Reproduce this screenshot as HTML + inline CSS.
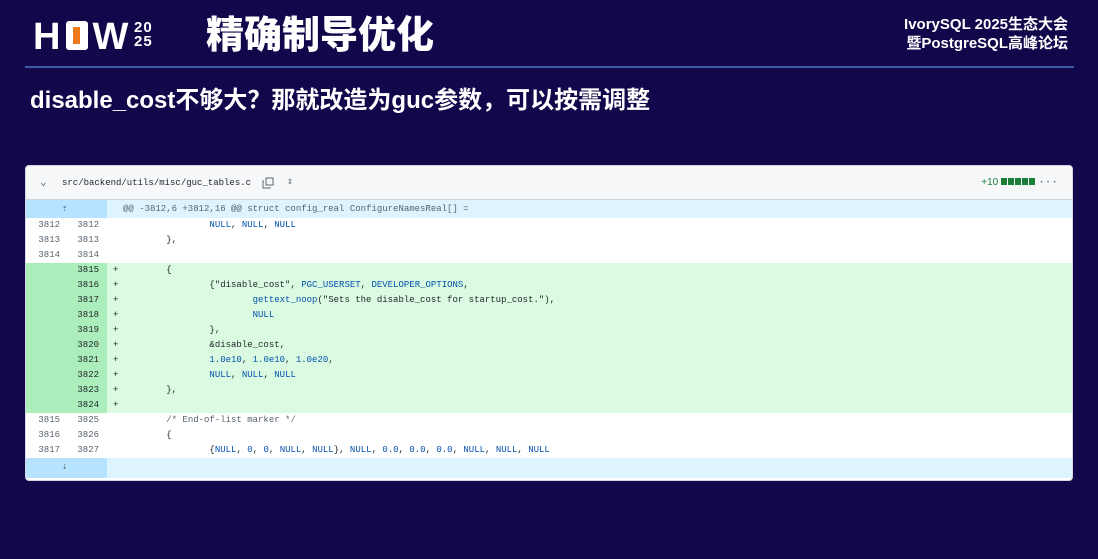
<!DOCTYPE html>
<html><head><meta charset="utf-8"><style>
*{margin:0;padding:0;box-sizing:border-box}
body{width:1098px;height:559px;background:#12074a;position:relative;overflow:hidden;font-family:"Liberation Sans","Noto Sans CJK SC",sans-serif;color:#fff}
.logo{position:absolute;left:33px;top:17px;font:900 38px/40px "Liberation Sans",sans-serif;letter-spacing:2px}
.yr{position:absolute;left:134px;top:21px;font:900 15px/14px "Liberation Sans",sans-serif;letter-spacing:1px}
.t{position:absolute;left:206px;top:14px;font-weight:900;font-size:38px;line-height:44px}
.r{position:absolute;right:30px;top:15px;text-align:right;font-weight:bold;font-size:15px;line-height:19px}
.line{position:absolute;left:25px;top:66px;width:1049px;height:2px;background:#3b5aa6}
.sub{position:absolute;left:30px;top:83px;font-weight:bold;font-size:24px;line-height:30px}
.cj{font-family:"Noto Sans CJK SC",sans-serif}
.card{position:absolute;left:25px;top:165px;width:1048px;height:316px;background:#fff;border:1px solid #d0d7de;border-radius:4px;overflow:hidden;color:#1f2328}
.hd{height:34px;background:#f6f8fa;border-bottom:1px solid #d0d7de;position:relative;font:9px/34px "Liberation Mono",monospace}
.row{height:15px;position:relative;font:9px/15px "Liberation Mono",monospace;white-space:pre}
.g{position:absolute;top:0;height:100%;width:81px;left:0}
.n1,.n2{position:absolute;width:30px;text-align:right;color:#59636e}
.n1{left:4px}.n2{left:43px}
.c{position:absolute;left:97px}
.p{position:absolute;left:87px}
.add{background:#dafbe1}.add .g{background:#aceebb}.add .n2{color:#1f2328}
.hk{background:#ddf4ff;height:18px;line-height:18px}.hk .g{background:#b6e3ff}
.b{color:#0550ae}
</style></head><body>
<div class="logo">H<span style="display:inline-block;width:22px;height:29px;background:#fff;border-radius:3px;position:relative;vertical-align:-1px;margin:0 4px"><span style="position:absolute;left:7px;top:6px;width:7px;height:17px;background:#f07a1a"></span></span>W</div>
<div class="yr">20<br>25</div>
<div class="t">精确制导优化</div>
<div class="r">IvorySQL 2025生态大会<br>暨PostgreSQL高峰论坛</div>
<div class="line"></div>
<div class="sub">disable_cost不够大<span class="cj">？</span>那就改造为guc参数<span class="cj">，</span>可以按需调整</div>
<div class="card">
<div class="hd"><span style="position:absolute;left:14px;color:#59636e;font-size:11px">⌄</span><span style="position:absolute;left:36px">src/backend/utils/misc/guc_tables.c</span>
<svg style="position:absolute;left:236px;top:11px" width="12" height="12" viewBox="0 0 12 12" fill="none" stroke="#59636e"><rect x="4" y="1" width="7" height="7"/><path d="M2 4H1v7h7v-1"/></svg>
<span style="position:absolute;left:261px;color:#59636e;font-size:10px">⇕</span>
<span style="position:absolute;right:37px;color:#1a7f37;font-family:'Liberation Sans',sans-serif;font-size:10px">+10 <span style="display:inline-block;width:34px;height:7px;background:repeating-linear-gradient(90deg,#1a7f37 0 6px,transparent 6px 7px)"></span></span>
<span style="position:absolute;right:14px;color:#59636e;font-size:11px">···</span></div>
<div class="row hk"><div class="g"></div><span style="position:absolute;left:36px;color:#59636e">⇡</span><span class="c" style="color:#59636e">@@ -3812,6 +3812,16 @@ struct config_real ConfigureNamesReal[] =</span></div>
<div class="row"><span class="n1">3812</span><span class="n2">3812</span><span class="c">		<span class="b">NULL</span>, <span class="b">NULL</span>, <span class="b">NULL</span></span></div>
<div class="row"><span class="n1">3813</span><span class="n2">3813</span><span class="c">	},</span></div>
<div class="row"><span class="n1">3814</span><span class="n2">3814</span><span class="c"></span></div>
<div class="row add"><div class="g"></div><span class="n2">3815</span><span class="p">+</span><span class="c">	{</span></div>
<div class="row add"><div class="g"></div><span class="n2">3816</span><span class="p">+</span><span class="c">		{"disable_cost", <span class="b">PGC_USERSET</span>, <span class="b">DEVELOPER_OPTIONS</span>,</span></div>
<div class="row add"><div class="g"></div><span class="n2">3817</span><span class="p">+</span><span class="c">			<span class="b">gettext_noop</span>("Sets the disable_cost for startup_cost."),</span></div>
<div class="row add"><div class="g"></div><span class="n2">3818</span><span class="p">+</span><span class="c">			<span class="b">NULL</span></span></div>
<div class="row add"><div class="g"></div><span class="n2">3819</span><span class="p">+</span><span class="c">		},</span></div>
<div class="row add"><div class="g"></div><span class="n2">3820</span><span class="p">+</span><span class="c">		&amp;disable_cost,</span></div>
<div class="row add"><div class="g"></div><span class="n2">3821</span><span class="p">+</span><span class="c">		<span class="b">1.0e10</span>, <span class="b">1.0e10</span>, <span class="b">1.0e20</span>,</span></div>
<div class="row add"><div class="g"></div><span class="n2">3822</span><span class="p">+</span><span class="c">		<span class="b">NULL</span>, <span class="b">NULL</span>, <span class="b">NULL</span></span></div>
<div class="row add"><div class="g"></div><span class="n2">3823</span><span class="p">+</span><span class="c">	},</span></div>
<div class="row add"><div class="g"></div><span class="n2">3824</span><span class="p">+</span><span class="c"></span></div>
<div class="row"><span class="n1">3815</span><span class="n2">3825</span><span class="c">	<span style="color:#59636e">/* End-of-list marker */</span></span></div>
<div class="row"><span class="n1">3816</span><span class="n2">3826</span><span class="c">	{</span></div>
<div class="row"><span class="n1">3817</span><span class="n2">3827</span><span class="c">		{<span class="b">NULL</span>, <span class="b">0</span>, <span class="b">0</span>, <span class="b">NULL</span>, <span class="b">NULL</span>}, <span class="b">NULL</span>, <span class="b">0.0</span>, <span class="b">0.0</span>, <span class="b">0.0</span>, <span class="b">NULL</span>, <span class="b">NULL</span>, <span class="b">NULL</span></span></div>
<div class="row hk" style="height:20px"><div class="g"></div><span style="position:absolute;left:36px;color:#59636e">⇣</span></div>
</div>
</body></html>
